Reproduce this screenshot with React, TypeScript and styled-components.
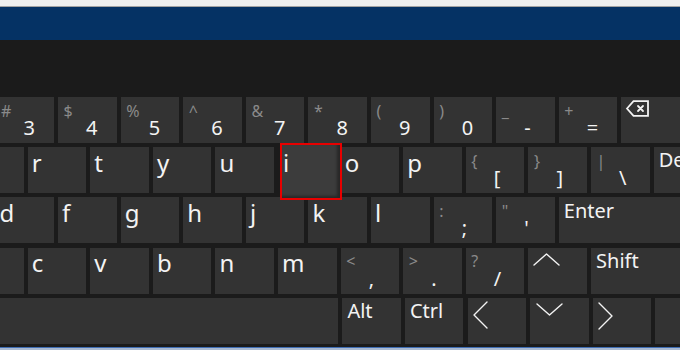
import React from "react";
import styled, { createGlobalStyle } from "styled-components";

const Global = createGlobalStyle`
  html, body { margin: 0; padding: 0; background: #1b1b1b; }
  body {
    width: 680px;
    height: 350px;
    overflow: hidden;
    font-family: "Noto Sans", "Open Sans", sans-serif;
  }
`;

const Window = styled.div`
  width: 680px;
  height: 350px;
  display: flex;
  flex-direction: column;
  overflow: hidden;
`;

const TopStrip = styled.div`
  flex: 0 0 auto;
  height: 6px;
  background: #efefef;
  border-bottom: 1px solid #a3a3a3;
`;

const TitleBar = styled.div`
  flex: 0 0 auto;
  height: 33px;
  background: #053264;
`;

const Panel = styled.div`
  flex: 1 1 auto;
  background: #1b1b1b;
  padding: 57px 0 3.2px;
  display: flex;
  flex-direction: column;
  gap: 4.2px;
  overflow: hidden;
`;

const BottomEdge = styled.div`
  flex: 0 0 auto;
  height: 2px;
  border-top: 1px solid #3f6db3;
  background: #a9bad3;
`;

const Row = styled.div<{ $offset: number }>`
  display: flex;
  gap: 4.1px;
  height: 46px;
  flex: 0 0 auto;
  margin-left: ${(p) => p.$offset}px;
`;

const KeyBox = styled.div<{ $w?: number; $hl?: boolean }>`
  position: relative;
  flex: 0 0 ${(p) => p.$w ?? 58.5}px;
  height: 46px;
  box-sizing: border-box;
  background: ${(p) => (p.$hl ? "transparent" : "#333333")};
  color: #f3f3f3;
  white-space: nowrap;
`;

const Letter = styled.div`
  font-size: 24px;
  line-height: 24px;
  padding: 3.7px 0 0 4px;
`;

const Word = styled.div`
  font-size: 20px;
  line-height: 20px;
  padding: 3.3px 0 0 5px;
`;

const Shifted = styled.div`
  font-size: 16px;
  line-height: 16px;
  color: #8a8a8a;
  padding: 5.5px 0 0 5.5px;
`;

const Main = styled.div`
  font-size: 20px;
  line-height: 20px;
  padding-left: 28px;
  margin-top: -0.5px;
`;

const Highlight = styled.div`
  position: absolute;
  z-index: 2;
  left: 1.9px;
  top: -4.5px;
  width: 62px;
  height: 57.3px;
  box-sizing: border-box;
  border: 2px solid #e80000;
  background: #3c3c3c;
  box-shadow: inset -3px -2px 3px rgba(0, 0, 0, 0.35);
  color: #f3f3f3;
`;

const HighlightLetter = styled(Letter)`
  padding: 6.2px 0 0 1px;
`;

const Icon = styled.svg<{ $left: number; $top: number }>`
  display: block;
  margin: ${(p) => p.$top}px 0 0 ${(p) => p.$left}px;
  overflow: visible;
`;

type Spec =
  | { t: "letter"; c: string; hl?: boolean }
  | { t: "dual"; s: string; p: string }
  | { t: "word"; c: string; w?: number }
  | { t: "icon"; n: "back" | "up" | "down" | "left" | "right"; w?: number }
  | { t: "blank"; w?: number };

const L = (c: string, hl?: boolean): Spec => ({ t: "letter", c, hl });
const D = (s: string, p: string): Spec => ({ t: "dual", s, p });
const B = (w?: number): Spec => ({ t: "blank", w });

const stroke = { stroke: "#f3f3f3", fill: "none", strokeWidth: 1.4, strokeLinecap: "round" as const, strokeLinejoin: "round" as const };

function KeyIcon({ n }: { n: string }) {
  switch (n) {
    case "back":
      return (
        <Icon $left={4.5} $top={3} width="23" height="17" viewBox="0 0 23 17">
          <path d="M1 8.5 L7.5 1.2 H22 V15.8 H7.5 Z" {...stroke} strokeWidth={1.8} strokeLinecap="butt" strokeLinejoin="miter" />
          <path d="M12 6 L17 11 M17 6 L12 11" {...stroke} strokeWidth={1.8} />
        </Icon>
      );
    case "up":
      return (
        <Icon $left={5} $top={5} width="27" height="13" viewBox="0 0 27 13">
          <path d="M1 12 L13.5 1 L26 12" {...stroke} />
        </Icon>
      );
    case "down":
      return (
        <Icon $left={5.7} $top={5} width="27" height="13" viewBox="0 0 27 13">
          <path d="M1 1 L13.5 12 L26 1" {...stroke} />
        </Icon>
      );
    case "left":
      return (
        <Icon $left={5.6} $top={3} width="15" height="28" viewBox="0 0 15 28">
          <path d="M14 1 L1 14 L14 27" {...stroke} />
        </Icon>
      );
    default:
      return (
        <Icon $left={5.6} $top={4} width="15" height="28" viewBox="0 0 15 28">
          <path d="M1 1 L14 14 L1 27" {...stroke} />
        </Icon>
      );
  }
}

function Key({ spec }: { spec: Spec }) {
  if (spec.t === "letter") {
    return (
      <KeyBox $hl={spec.hl}>
        {spec.hl ? (
          <Highlight>
            <HighlightLetter>{spec.c}</HighlightLetter>
          </Highlight>
        ) : (
          <Letter>{spec.c}</Letter>
        )}
      </KeyBox>
    );
  }
  if (spec.t === "dual") {
    return (
      <KeyBox>
        <Shifted>{spec.s}</Shifted>
        <Main>{spec.p}</Main>
      </KeyBox>
    );
  }
  if (spec.t === "word") {
    return (
      <KeyBox $w={spec.w}>
        <Word>{spec.c}</Word>
      </KeyBox>
    );
  }
  if (spec.t === "icon") {
    return (
      <KeyBox $w={spec.w}>
        <KeyIcon n={spec.n} />
      </KeyBox>
    );
  }
  return <KeyBox $w={spec.w} />;
}

const rows: { offset: number; keys: Spec[] }[] = [
  {
    offset: -4.5,
    keys: [
      D("#", "3"), D("$", "4"), D("%", "5"), D("^", "6"), D("&", "7"), D("*", "8"),
      D("(", "9"), D(")", "0"), D("_", "-"), D("+", "="), { t: "icon", n: "back", w: 120 },
    ],
  },
  {
    offset: -34.9,
    keys: [
      B(), L("r"), L("t"), L("y"), L("u"), L("i", true), L("o"), L("p"),
      D("{", "["), D("}", "]"), D("|", "\\"), { t: "word", c: "Del", w: 80 },
    ],
  },
  {
    offset: -4.5,
    keys: [
      L("d"), L("f"), L("g"), L("h"), L("j"), L("k"), L("l"),
      D(":", ";"), D("\"", "'"), { t: "word", c: "Enter", w: 160 },
    ],
  },
  {
    offset: -34.9,
    keys: [
      B(), L("c"), L("v"), L("b"), L("n"), L("m"),
      D("<", ","), D(">", "."), D("?", "/"), { t: "icon", n: "up" }, { t: "word", c: "Shift", w: 160 },
    ],
  },
  {
    offset: -4.5,
    keys: [
      B(342.8), { t: "word", c: "Alt" }, { t: "word", c: "Ctrl" },
      { t: "icon", n: "left" }, { t: "icon", n: "down" }, { t: "icon", n: "right" }, B(80),
    ],
  },
];

export default function App() {
  return (
    <>
      <Global />
      <Window>
        <TopStrip />
        <TitleBar />
        <Panel>
          {rows.map((r, i) => (
            <Row key={i} $offset={r.offset}>
              {r.keys.map((k, j) => (
                <Key key={j} spec={k} />
              ))}
            </Row>
          ))}
        </Panel>
        <BottomEdge />
      </Window>
    </>
  );
}
